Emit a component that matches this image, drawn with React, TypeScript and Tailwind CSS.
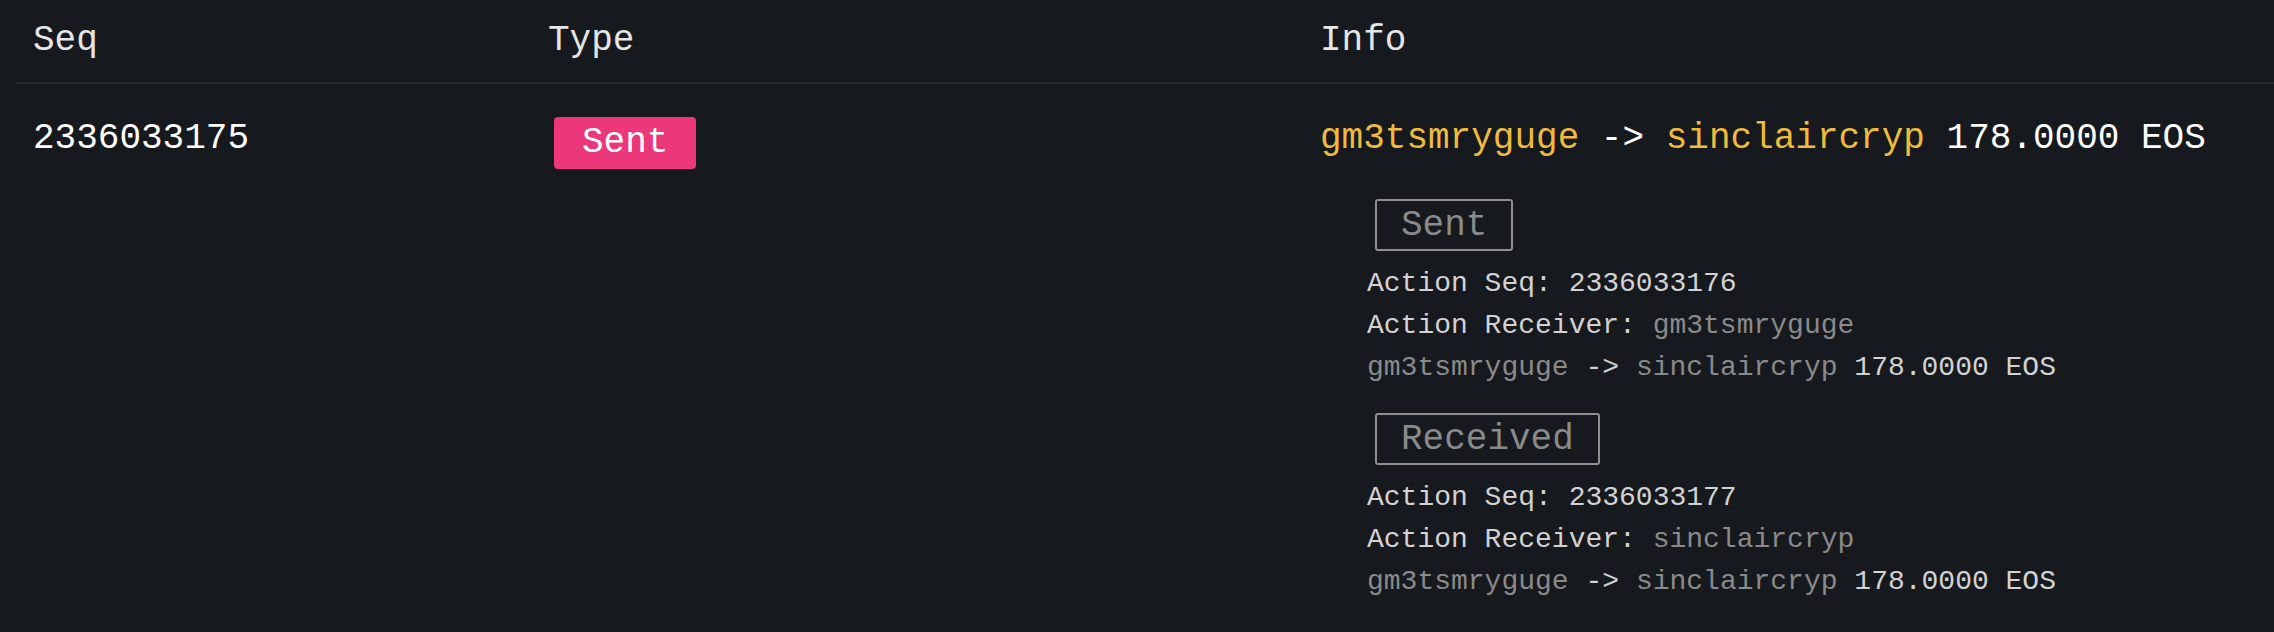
import React from 'react';

interface ActionTrace {
  label: string;
  seq: string;
  receiver: string;
  from: string;
  to: string;
  amount: string;
}

const traces: ActionTrace[] = [
  { label: 'Sent', seq: '2336033176', receiver: 'gm3tsmryguge', from: 'gm3tsmryguge', to: 'sinclaircryp', amount: '178.0000 EOS' },
  { label: 'Received', seq: '2336033177', receiver: 'sinclaircryp', from: 'gm3tsmryguge', to: 'sinclaircryp', amount: '178.0000 EOS' },
];

const TraceBlock: React.FC<{ trace: ActionTrace }> = ({ trace }) => (
  <div className="flex flex-col">
    <div>
      <span className="ml-2 inline-block h-[52px] rounded-[3px] border-2 border-[#8f8f8f] px-6 text-[36px] leading-[49px] text-[#8a8a8a]">
        {trace.label}
      </span>
    </div>
    <div className="mt-[10px] text-[28px] leading-[42px] text-[#d2d2d2]">
      <div>Action Seq: {trace.seq}</div>
      <div>
        Action Receiver: <span className="text-[#8a8a8a]">{trace.receiver}</span>
      </div>
      <div>
        <span className="text-[#8a8a8a]">{trace.from}</span> -&gt;{' '}
        <span className="text-[#8a8a8a]">{trace.to}</span> {trace.amount}
      </div>
    </div>
  </div>
);

export default function App() {
  return (
    <div className="min-h-screen bg-[#16191d] font-['Liberation_Mono',monospace] text-[#e6e6e6]">
      <div className="ml-4">
        {/* header */}
        <div className="grid h-[84px] grid-cols-[515px_772px_1fr] items-center border-b-2 border-[#262a2f] text-[36px]">
          <div className="pl-[17px]">Seq</div>
          <div className="pl-[17px]">Type</div>
          <div className="pl-[17px]">Info</div>
        </div>

        {/* row */}
        <div className="grid grid-cols-[515px_772px_1fr] pb-8 text-[36px]">
          <div className="pl-[17px] pt-[34px] leading-[42px] text-white">2336033175</div>
          <div className="pl-[17px] pt-[32px]">
            <span className="ml-[6px] inline-block h-[52px] rounded-[4px] bg-[#ec377b] px-7 leading-[52px] text-white">
              Sent
            </span>
          </div>
          <div className="pl-[17px] pt-[34px]">
            <div className="leading-[42px] text-white">
              <span className="text-[#efbb3b]">gm3tsmryguge</span> -&gt;{' '}
              <span className="text-[#efbb3b]">sinclaircryp</span> 178.0000 EOS
            </div>
            <div className="mt-[39px] flex flex-col gap-6 pl-[47px]">
              {traces.map((t) => (
                <TraceBlock key={t.seq} trace={t} />
              ))}
            </div>
          </div>
        </div>
      </div>
    </div>
  );
}
